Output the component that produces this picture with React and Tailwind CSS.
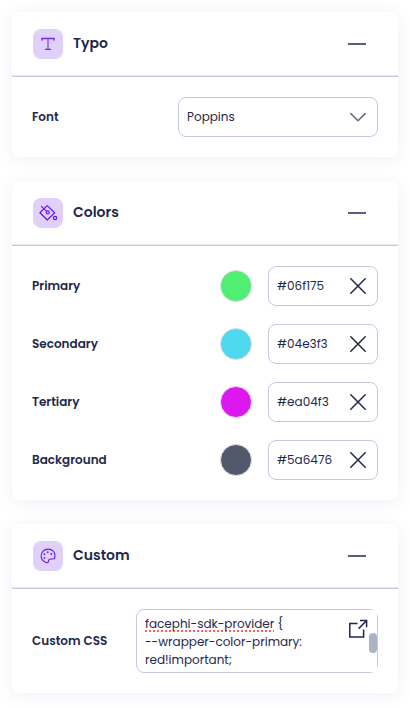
import React from "react";

const ink = "#1f2849";

function TypeIcon() {
  return (
    <svg width="18" height="18" viewBox="0 0 18 18" fill="none" stroke="#8f52f7" strokeWidth="1.4" strokeLinecap="round" strokeLinejoin="round">
      <path d="M3 5.1V3.5H15V5.1" stroke="#7424f0" />
      <path d="M9 4V14.4" />
      <path d="M6.6 14.4H11.4" stroke="#7424f0" />
    </svg>
  );
}

function BucketIcon() {
  return (
    <svg width="18" height="18" viewBox="0 0 18 18" fill="none" stroke="#6a14ee" strokeWidth="1.2" strokeLinecap="round" strokeLinejoin="round">
      <path d="M8.2 1.6L15.6 8.8L8.2 16L0.9 8.8Z" />
      <path d="M2.4 2.4L7.6 7.4" />
      <circle cx="8.8" cy="8.4" r="1.5" />
      <circle cx="16" cy="14" r="1.6" />
    </svg>
  );
}

function PaletteIcon() {
  return (
    <svg width="18" height="18" viewBox="0 0 18 18" fill="none" stroke="#6a14ee" strokeWidth="1.1" strokeLinecap="round" strokeLinejoin="round">
      <path d="M9.2 2.1C13 2.1 15.9 4.8 15.9 8.4V10.2C15.9 11.4 15.3 12 14.3 12H11.6C10 12 9.5 12.8 9.5 14C9.5 15.4 8.4 16 7.2 15.5C4.2 14.3 2.1 12 2.1 8.9C2.1 5 5.2 2.1 9.2 2.1Z" />
      <g fill="#6a14ee" stroke="none">
        <circle cx="5.4" cy="10.9" r="0.9" />
        <circle cx="5.4" cy="7.2" r="0.9" />
        <circle cx="8.7" cy="5.2" r="0.9" />
        <circle cx="12.3" cy="7" r="0.9" />
      </g>
    </svg>
  );
}

function Panel({ icon, title, children }) {
  return (
    <section className="rounded-lg bg-white shadow-[0_2px_16px_rgba(90,110,180,0.10)]">
      <header className="flex h-[65px] items-center border-b border-[#c5cae1] pr-8 pl-[21px] shadow-[inset_0_-1px_0_#e6e8f2]">
        <span className="flex size-[30px] items-center justify-center rounded-lg bg-[#dfd0fc]">{icon}</span>
        <h2 className="mb-0.5 ml-2.5 text-sm leading-5 font-semibold">{title}</h2>
        <span className="ml-auto h-0.5 w-[18px] bg-[#58607f]" />
      </header>
      <div className="flex flex-col gap-[18px] p-5">{children}</div>
    </section>
  );
}

function Row({ label, children }) {
  return (
    <div className="flex items-center justify-between">
      <span className="text-xs font-semibold whitespace-nowrap">{label}</span>
      {children}
    </div>
  );
}

const colors = [
  { label: "Primary", value: "#06f175", swatch: "bg-[#50ee72]" },
  { label: "Secondary", value: "#04e3f3", swatch: "bg-[#4fd9ef]" },
  { label: "Tertiary", value: "#ea04f3", swatch: "bg-[#dc18ee]" },
  { label: "Background", value: "#5a6476", swatch: "bg-[#52596b]" },
];

export default function App() {
  return (
    <main className="flex min-h-[708px] flex-col gap-6 bg-white p-3 text-[#1f2849] [font-family:Poppins,Inter,sans-serif]">
      <Panel icon={<TypeIcon />} title="Typo">
        <Row label="Font">
          <div className="flex h-10 w-[200px] items-center justify-between rounded-lg border border-[#c5cae1] pr-[11px] pl-2">
            <span className="text-xs">Poppins</span>
            <svg width="16" height="10" viewBox="0 0 16 10" fill="none" stroke="#626a86" strokeWidth="1.5" strokeLinecap="round" strokeLinejoin="round">
              <path d="M0.8 1.6L8 8.8L15.2 1.6" />
            </svg>
          </div>
        </Row>
      </Panel>

      <Panel icon={<BucketIcon />} title="Colors">
        {colors.map((c) => (
          <Row key={c.label} label={c.label}>
            <div className="flex items-center gap-4">
              <span className={`size-8 rounded-full border border-[#dcdfea] ${c.swatch}`} />
              <div className="flex h-10 w-[110px] items-center justify-between rounded-lg border border-[#c5cae1] pr-[11px] pl-2">
                <span className="text-xs">{c.value}</span>
                <svg width="16" height="16" viewBox="0 0 16 16" fill="none" stroke={ink} strokeWidth="1.5" strokeLinecap="round">
                  <path d="M0.8 0.8L15.2 15.2M15.2 0.8L0.8 15.2" />
                </svg>
              </div>
            </div>
          </Row>
        ))}
      </Panel>

      <Panel icon={<PaletteIcon />} title="Custom">
        <Row label="Custom CSS">
          <div className="flex h-16 w-[242px] rounded-lg border border-[#c5cae1] pl-2">
            <p className="mt-[5px] w-[190px] text-xs leading-[18px] whitespace-nowrap">
              <span className="underline decoration-[#f5655e] decoration-dotted decoration-2 underline-offset-2 [text-decoration-skip-ink:none]">facephi-sdk-provider</span>
              {" {"}
              <br />
              --wrapper-color-primary:
              <br />
              red!important;
            </p>
            <svg className="mt-[9px] ml-[13px] shrink-0" width="20" height="20" viewBox="0 0 20 20" fill="none" stroke={ink} strokeWidth="1.5">
              <path d="M9.5 4.4H1.8V18H15.6V10.5" />
              <path d="M12 1.6H18.6V8.2M18.4 1.8L10.6 9.6" />
            </svg>
            <span className="ml-auto flex w-2 bg-white pt-[23px]">
              <span className="h-5 w-2 rounded-full bg-[#adb3c7]" />
            </span>
          </div>
        </Row>
      </Panel>
    </main>
  );
}
